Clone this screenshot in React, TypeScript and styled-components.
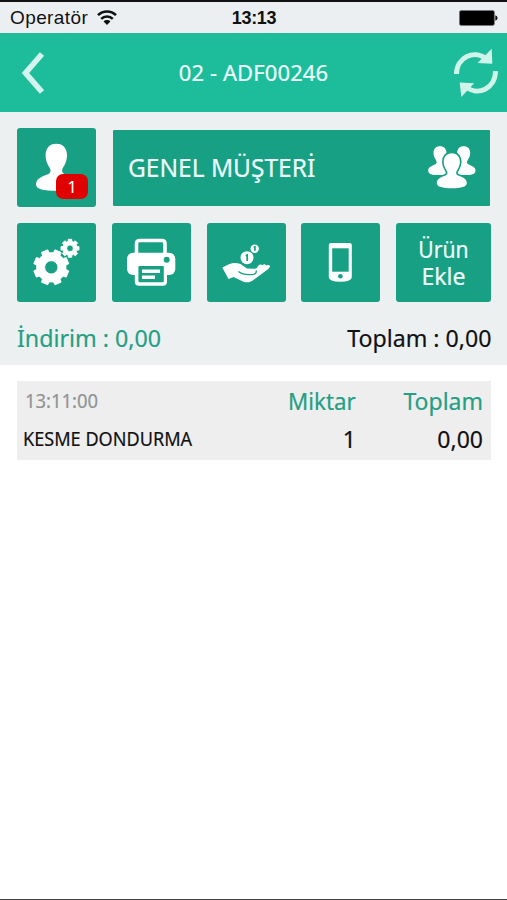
import React from "react";
import styled, { createGlobalStyle } from "styled-components";

const GlobalStyle = createGlobalStyle`
  * { box-sizing: border-box; }
  html, body { margin: 0; background: #fff; }
  body { font-family: "Noto Sans", "Open Sans", sans-serif; color: #111; }
  svg { display: block; flex: none; }
`;

const Screen = styled.main`
  width: 507px;
  height: 900px;
  display: flex;
  flex-direction: column;
  background: #fff;
  border-top: 2px solid #111;
  border-bottom: 1px solid #444;
  overflow: hidden;
`;

const Label = styled.span<{
  $size: number;
  $spacing?: number;
  $color?: string;
  $stretch?: number;
  $origin?: "left" | "right" | "center";
}>`
  font-size: ${(p) => p.$size}px;
  letter-spacing: ${(p) => p.$spacing ?? 0}px;
  color: ${(p) => p.$color ?? "#111"};
  line-height: 28px;
  white-space: nowrap;
  -webkit-text-stroke: 0.2px currentColor;
  transform: scaleX(${(p) => p.$stretch ?? 1});
  transform-origin: ${(p) => p.$origin ?? "left"} center;
`;

const StatusBar = styled.div`
  height: 31px;
  flex: none;
  display: grid;
  grid-template-columns: 1fr auto 1fr;
  align-items: center;
  padding: 0 9px 0 10px;
  background: #eceff1;
  font-family: "Liberation Sans", Arial, sans-serif;
`;

const Carrier = styled.div`
  display: flex;
  align-items: center;
  gap: 9px;
  font-size: 19px;
  line-height: 24px;
  letter-spacing: 0.4px;
`;

const Clock = styled.div`
  font-size: 18px;
  font-weight: 700;
  line-height: 24px;
  letter-spacing: -0.3px;
`;

const BatterySlot = styled.div`
  justify-self: end;
`;

const Header = styled.header`
  height: 79px;
  flex: none;
  display: grid;
  grid-template-columns: 1fr auto 1fr;
  align-items: center;
  padding: 0 8px;
  background: #1dbd9c;
`;

const Title = styled(Label)`
  padding-bottom: 2px;
`;

const IconButton = styled.button<{ $end?: boolean }>`
  border: 0;
  padding: 0;
  margin-left: ${(p) => (p.$end ? 0 : 13)}px;
  background: none;
  justify-self: ${(p) => (p.$end ? "end" : "start")};
`;

const Panel = styled.section`
  height: 253px;
  flex: none;
  padding: 16px 16px 0 17px;
  background: #ecf0f1;
`;

const CustomerRow = styled.div`
  display: flex;
  align-items: flex-start;
  gap: 17px;
  height: 95px;
`;

const Tile = styled.button<{ $width?: number }>`
  position: relative;
  width: ${(p) => p.$width ?? 79}px;
  height: 79px;
  flex: none;
  padding: 0;
  border: 0;
  border-radius: 3px;
  background: #18a084;
  font-family: inherit;
  display: flex;
  align-items: center;
  justify-content: center;
`;

const Badge = styled.span`
  position: absolute;
  left: 39px;
  top: 46px;
  width: 32px;
  height: 25px;
  border-radius: 7px;
  background: #e00202;
  color: #fff;
  font-size: 17px;
  line-height: 26px;
  text-align: center;
`;

const CustomerBar = styled.button`
  flex: none;
  width: 377px;
  height: 76px;
  margin-top: 1.5px;
  padding: 0 14px 0 15px;
  border: 0;
  border-radius: 1px;
  background: #18a084;
  font-family: inherit;
  display: flex;
  align-items: center;
  justify-content: space-between;
`;

const CustomerName = styled(Label)`
  padding-bottom: 2px;
`;

const Tools = styled.div`
  display: flex;
  justify-content: space-between;
`;

const AddLabel = styled.span`
  display: flex;
  flex-direction: column;
  align-items: center;
  padding-top: 1px;
`;

const AddLine = styled(Label)`
  line-height: 27px;
`;

const Totals = styled.div`
  display: flex;
  justify-content: space-between;
  margin-top: 22px;
`;

const LineItem = styled.article`
  margin: 16px 16px 0 17px;
  height: 79px;
  padding: 6px 8px 0 6px;
  background: #eee;
  display: grid;
  grid-template-columns: 1fr 90px 127px;
  grid-template-rows: 38px 28px;
`;

const Cell = styled.div<{ $right?: boolean; $indent?: number }>`
  display: flex;
  align-items: center;
  height: 28px;
  justify-content: ${(p) => (p.$right ? "flex-end" : "flex-start")};
  padding-left: ${(p) => p.$indent ?? 0}px;
`;

function gearPath(cx: number, cy: number, outer: number, root: number, hole: number, turn: number) {
  const point = (r: number, a: number) =>
    `${(cx + r * Math.cos(a)).toFixed(2)} ${(cy + r * Math.sin(a)).toFixed(2)}`;
  const pts: string[] = [];
  for (let i = 0; i < 8; i++) {
    const a = turn + (i * Math.PI) / 4;
    pts.push(point(root, a - 0.25), point(outer, a - 0.19), point(outer, a + 0.19), point(root, a + 0.25));
  }
  return `M${pts.join("L")}ZM${cx - hole} ${cy}a${hole} ${hole} 0 1 0 ${hole * 2} 0a${hole} ${hole} 0 1 0 ${-hole * 2} 0Z`;
}

const Wifi = () => (
  <svg width="20" height="16" viewBox="0 0 20 16" fill="none" stroke="#111" strokeWidth="2.5">
    <path d="M1 5.2C6 .1 14 .1 19 5.2" />
    <path d="M4.2 8.800c3.2-3.2 8.4-3.2 11.6 0" />
    <path d="M6.600 11.400c1.800-1.900 5-1.900 6.800 0L10 15Z" fill="#111" stroke="none" />
  </svg>
);

const Battery = () => (
  <svg width="39" height="16" viewBox="0 0 39 16">
    <rect x=".4" y=".4" width="35" height="15.2" rx="2" fill="#000" stroke="#777" strokeWidth=".8" />
    <path d="M36.3 5.2q2.3.6 2.3 2.8t-2.3 2.8Z" fill="#111" />
  </svg>
);

const BackIcon = () => (
  <svg width="24" height="44" viewBox="0 0 24 44">
    <path d="M21 3 4.500 22 21 41" fill="none" stroke="#d3f5ed" strokeWidth="5.700" />
  </svg>
);

const RefreshIcon = () => (
  <svg width="46" height="50" viewBox="0 0 46 50">
    <g fill="none" stroke="#d0f3ea" strokeWidth="5">
      <path d="M3.500 26C3.500 9.500 21 .5 34 11.500" />
      <path d="M42.500 23C42.500 40 25 49.500 12 38" />
    </g>
    <path d="M38.700 .8 39.300 15.700 24.500 15ZM6.700 34.500 21.200 35.200 8.300 49Z" fill="#d0f3ea" />
  </svg>
);

const PERSON =
  "M39.300 15.700C46.200 15.700 50 20.400 50 27.300C50 33.600 47.300 37.500 45.600 40.600C44.300 43.500 45.500 45.600 49.300 46.800C55.500 48.700 60 51.800 60 56.300C60 61.400 52 62.800 39.300 62.800C26.600 62.800 19 61.400 19 56.300C19 51.800 23.500 48.700 29.700 46.800C33.400 45.600 34.300 43.500 33 40.600C31.300 37.500 28.600 33.600 28.600 27.300C28.600 20.400 32.400 15.700 39.300 15.700Z";

const PersonIcon = () => (
  <svg width="79" height="79" viewBox="0 0 79 79" fill="#fff">
    <path d={PERSON} />
  </svg>
);

const PeopleIcon = () => (
  <svg width="48" height="43" viewBox="0 0 48 43" fill="#fff">
    <path d="M12 .3C16 .3 18.500 3 18.500 7C18.500 11 16 13.500 15.800 15.500C16 19 22 18.500 22 24L19 29H8C3 29 .2 27.500 .2 24.500C.2 21 4 20 7 18.500C9.300 17.300 8.800 15.500 7.700 13.500C6.400 11.500 5.500 9.500 5.500 7C5.500 3 8 .3 12 .3Z" />
    <path d="M35.700 .3C31.700 .3 29.200 3 29.200 7C29.200 11 31.700 13.500 31.900 15.500C31.700 19 25.700 18.500 25.700 24L28.700 29H39.700C44.700 29 47.500 27.500 47.500 24.500C47.500 21 43.700 20 40.700 18.500C38.400 17.300 38.900 15.500 40 13.500C41.300 11.500 42.200 9.500 42.200 7C42.200 3 39.700 .3 35.700 .3Z" />
    <path
      d="M23.800 7.200C29 7.200 31.900 10.800 31.900 16C31.900 20.500 29.500 23.300 28.400 25.500C27.500 27.700 28.500 29.200 31.300 30.100C35.500 31.400 38.800 33.600 38.800 37C38.800 41 33 42.200 23.800 42.200C14.600 42.200 8.800 41 8.800 37C8.800 33.600 12.100 31.400 16.300 30.100C19.100 29.200 20.100 27.700 19.200 25.500C18.100 23.300 15.700 20.500 15.700 16C15.700 10.800 18.600 7.200 23.800 7.200Z"
      stroke="#18a084"
      strokeWidth="3.400"
      paintOrder="stroke"
    />
  </svg>
);

const GearsIcon = () => (
  <svg width="79" height="79" viewBox="0 0 79 79" fill="#fff" fillRule="evenodd" stroke="#fff" strokeWidth=".8" strokeLinejoin="round">
    <path d={gearPath(34.3, 44.3, 17.9, 14.8, 6.6, Math.PI / 8)} />
    <path d={gearPath(53, 25.3, 9.2, 7.2, 3.3, 0)} />
  </svg>
);

const PrinterIcon = () => (
  <svg width="79" height="79" viewBox="0 0 79 79">
    <rect x="15" y="29.700" width="48.300" height="22.300" rx="6" fill="#fff" />
    <path d="M24.500 30V20.500q0-3 3-3H50q3 0 3 3V30" fill="none" stroke="#fff" strokeWidth="3.600" />
    <rect x="22.800" y="39" width="32.200" height="23.800" rx="4" fill="#fff" />
    <rect x="26.400" y="43" width="25.400" height="16.300" rx="1" fill="#18a084" />
    <path d="M30 48.300H48M30 54.300H43" stroke="#fff" strokeWidth="3.600" />
    <circle cx="54.700" cy="36.700" r="3" fill="#18a084" />
  </svg>
);

const MoneyIcon = () => (
  <svg width="79" height="79" viewBox="0 0 79 79">
    <path
      d="M15.300 44.500 22 41.300C26 39.500 30 39.800 33.500 41L40 45.500 47.500 45.800Q50 46 50.800 43.300L52 42Q54 41 55.500 42.200Q57.500 40.500 59.300 42.200Q63.500 41.500 63 43.800L61 46.300 47 56.500C44 59.300 40 60.200 36 58.500L26.500 54 21.500 56Z"
      fill="#fff"
    />
    <path d="M31.500 48.500C35 51.500 42 51.800 46.500 51.300Q49.500 50.800 49.300 47.500" fill="none" stroke="#18a084" strokeWidth="1.300" />
    <circle cx="47.700" cy="25.700" r="4.200" fill="#fff" />
    <circle cx="40" cy="34.700" r="6.500" fill="#fff" stroke="#18a084" strokeWidth="1.600" paintOrder="stroke" />
    <path d="M38.700 32.700 40.200 31.900V38M46.700 24.500 47.900 23.900V27.800" fill="none" stroke="#18a084" strokeWidth="1.700" />
  </svg>
);

const PhoneIcon = () => (
  <svg width="79" height="79" viewBox="0 0 79 79">
    <path d="M30 20H48.600Q50.800 20 50.800 22V54Q50.800 58.700 39.300 58.700T27.800 54V22Q27.800 20 30 20Z" fill="#fff" />
    <rect x="31.200" y="25.300" width="16.500" height="23.400" fill="#18a084" />
    <circle cx="39.400" cy="53.300" r="2.300" fill="#18a084" />
  </svg>
);

const GREEN = "#249f84";
const LIGHT = "#effffb";

export default function App() {
  return (
    <>
      <GlobalStyle />
      <Screen>
        <StatusBar>
          <Carrier>
            Operatör
            <Wifi />
          </Carrier>
          <Clock>13:13</Clock>
          <BatterySlot>
            <Battery />
          </BatterySlot>
        </StatusBar>
        <Header>
          <IconButton aria-label="Geri">
            <BackIcon />
          </IconButton>
          <Title $size={22} $spacing={0.1} $color={LIGHT}>02 - ADF00246</Title>
          <IconButton $end aria-label="Yenile">
            <RefreshIcon />
          </IconButton>
        </Header>
        <Panel>
          <CustomerRow>
            <Tile>
              <PersonIcon />
              <Badge>1</Badge>
            </Tile>
            <CustomerBar>
              <CustomerName $size={26} $stretch={0.942} $color={LIGHT}>GENEL MÜŞTERİ</CustomerName>
              <PeopleIcon />
            </CustomerBar>
          </CustomerRow>
          <Tools>
            <Tile><GearsIcon /></Tile>
            <Tile><PrinterIcon /></Tile>
            <Tile><MoneyIcon /></Tile>
            <Tile><PhoneIcon /></Tile>
            <Tile $width={95}>
              <AddLabel>
                <AddLine $size={23} $color={LIGHT} $stretch={0.92} $origin="center">Ürün</AddLine>
                <AddLine $size={23} $color={LIGHT} $origin="center">Ekle</AddLine>
              </AddLabel>
            </Tile>
          </Tools>
          <Totals>
            <Label $size={23.5} $color={GREEN} $stretch={0.988}>İndirim : 0,00</Label>
            <Label $size={23.5} $stretch={0.985} $origin="right">Toplam : 0,00</Label>
          </Totals>
        </Panel>
        <LineItem>
          <Cell $indent={2}><Label $size={19} $stretch={0.97} $color="#8f9597">13:11:00</Label></Cell>
          <Cell $right><Label $size={23} $color={GREEN} $stretch={0.97} $origin="right">Miktar</Label></Cell>
          <Cell $right><Label $size={23} $color={GREEN} $origin="right">Toplam</Label></Cell>
          <Cell><Label $size={20} $stretch={0.905}>KESME DONDURMA</Label></Cell>
          <Cell $right><Label $size={23}>1</Label></Cell>
          <Cell $right><Label $size={23}>0,00</Label></Cell>
        </LineItem>
      </Screen>
    </>
  );
}
